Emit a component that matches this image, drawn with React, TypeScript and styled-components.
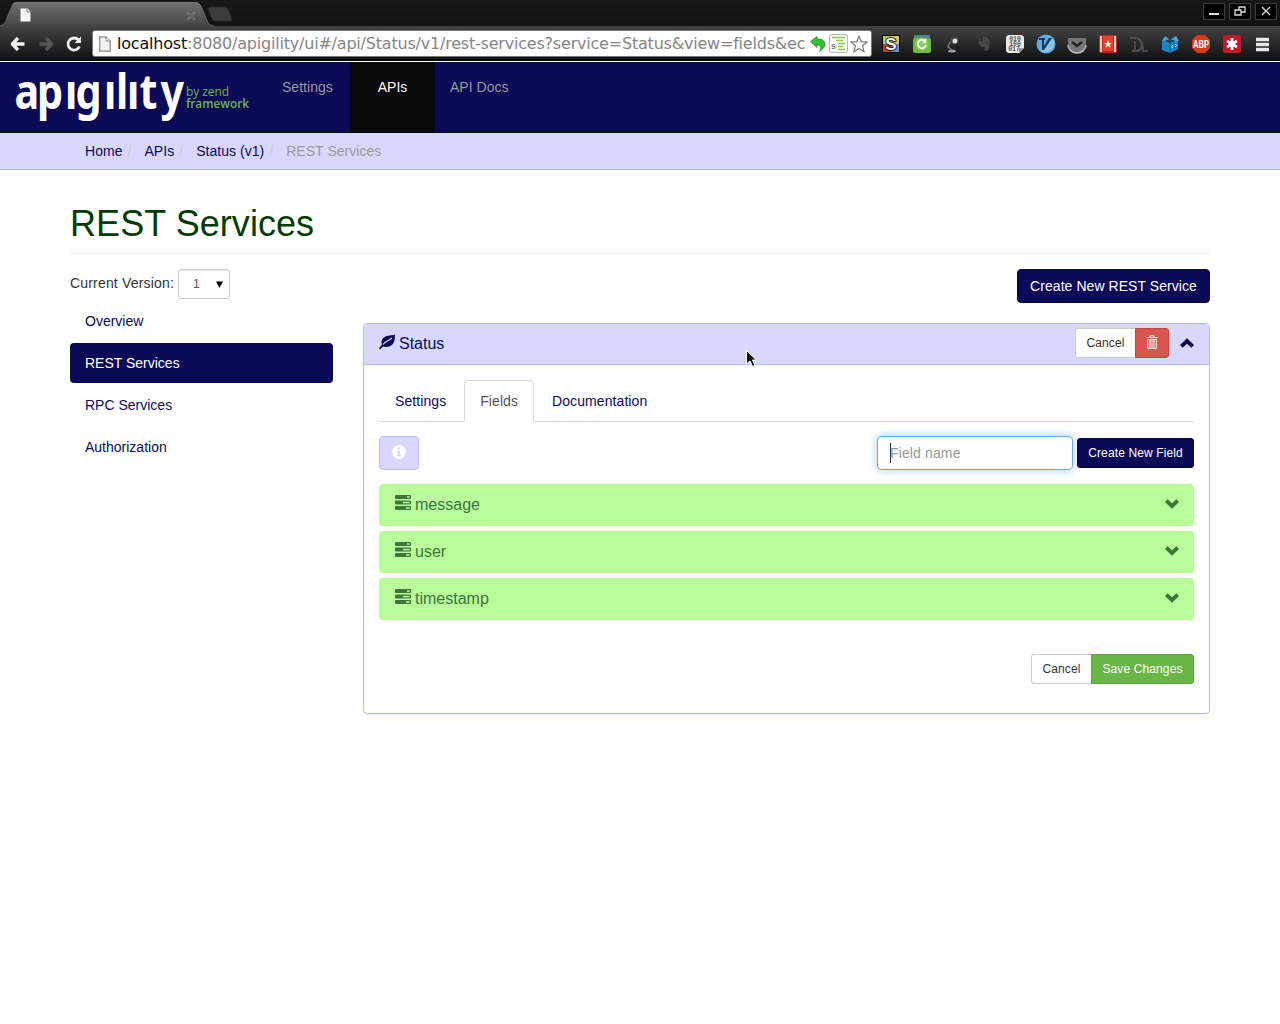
import React from "react";
import styled, { createGlobalStyle, css } from "styled-components";

const navy = "#0b0a56";
const lilac = "#d8d8ff";
const lilacBorder = "#b3b8ff";

const Global = createGlobalStyle`
  * { box-sizing: border-box; }
  body {
    margin: 0;
    background: #fff;
    color: #333;
    font: 14px/20px "Liberation Sans", Arial, sans-serif;
  }
  svg { display: block; flex: none; }
`;

const Screen = styled.div`
  position: relative;
  width: 1280px;
  height: 1024px;
  overflow: hidden;
`;

/* ---------- browser window ---------- */
const Chrome = styled.header`
  height: 62px;
  background: #111;
  border-bottom: 1px solid #fff;
`;
const TabStrip = styled.div`
  display: flex;
  justify-content: space-between;
  height: 26px;
  background: linear-gradient(#181818, #121212);
`;
const WindowButtons = styled.div`
  display: flex;
  gap: 4px;
  padding: 3px 3px 0 0;
`;
const WindowButton = styled.div`
  display: grid;
  place-items: center;
  width: 22px;
  height: 17px;
  background: #000;
  border: 1px solid #3c3c3c;
`;
const Toolbar = styled.div`
  display: flex;
  align-items: center;
  height: 35px;
  padding: 0 2px 0 8px;
  background: linear-gradient(#434343, #292929 50%, #111 95%, #000);
`;
const NavIcons = styled.div`
  display: flex;
  gap: 10px;
  width: 84px;
  padding-left: 1px;
`;
const AddressBar = styled.div`
  display: flex;
  align-items: center;
  width: 780px;
  height: 27px;
  padding: 0 2px 0 6px;
  background: #fff;
  border: 1px solid #777;
  border-radius: 3px;
`;
const Url = styled.div`
  width: 690px;
  margin: 0 2px 0 6px;
  white-space: nowrap;
  color: #858585;
  font: 16px/22px "DejaVu Sans", sans-serif;
  letter-spacing: -0.205px;
  b { color: #111; font-weight: 400; }
`;
const BarIcons = styled.div`
  display: flex;
  align-items: center;
  gap: 2px;
`;
const Extensions = styled.div`
  display: flex;
  margin-left: 3px;
`;
const Extension = styled.div`
  display: grid;
  place-items: center;
  width: 31px;
  height: 22px;
`;

/* ---------- page ---------- */
const Navbar = styled.nav`
  display: flex;
  height: 71px;
  background: ${navy};
  border-bottom: 1px solid #080808;
`;
const Brand = styled.div`
  width: 267px;
`;
const NavItem = styled.a<{ $active?: boolean; $width: number }>`
  width: ${(p) => p.$width}px;
  padding: 15px 0 0 15px;
  letter-spacing: 0.03px;
  color: ${(p) => (p.$active ? "#fff" : "#999")};
  ${(p) => p.$active && css`
    padding-left: 0;
    text-align: center;
    background: #080808;
  `}
`;
const Crumbs = styled.ol`
  display: flex;
  height: 37px;
  margin: 0;
  padding: 8px 85px;
  list-style: none;
  background: ${lilac};
  border-bottom: 1px solid ${lilacBorder};
`;
const Crumb = styled.li<{ $active?: boolean }>`
  letter-spacing: 0.04px;
  color: ${(p) => (p.$active ? "#999" : navy)};
  &:not(:first-child)::before {
    content: "/";
    padding: 0 13px 0 5px;
    color: #ccc;
  }
`;
const Container = styled.main`
  width: 1140px;
  margin: 0 auto;
`;
const PageTitle = styled.h1`
  height: 84px;
  margin: 0 0 15px;
  padding-top: 34px;
  color: #003c00;
  border-bottom: 1px solid #eee;
  font-size: 36px;
  font-weight: 400;
  line-height: 40px;
  letter-spacing: 0.06px;
`;
const Columns = styled.div`
  display: grid;
  grid-template-columns: 263px 847px;
  gap: 30px;
`;
const Version = styled.div`
  display: flex;
  gap: 4px;
  margin-bottom: 2px;
  line-height: 28px;
  letter-spacing: 0.18px;
`;
const Select = styled.div`
  display: flex;
  align-items: center;
  justify-content: space-between;
  width: 52px;
  height: 30px;
  padding: 0 6px 0 14px;
  color: #555;
  border: 1px solid #ccc;
  border-radius: 3px;
  box-shadow: inset 0 1px 1px rgba(0, 0, 0, 0.075);
  font-size: 12px;
`;
const SideNav = styled.nav`
  display: flex;
  flex-direction: column;
  gap: 2px;
`;
const SideLink = styled.a<{ $active?: boolean }>`
  height: 40px;
  padding: 10px 15px;
  border-radius: 4px;
  color: ${(p) => (p.$active ? "#fff" : navy)};
  background: ${(p) => (p.$active ? navy : "transparent")};
`;
const Actions = styled.div<{ $gap?: number; $lift?: boolean }>`
  display: flex;
  justify-content: flex-end;
  align-items: center;
  gap: ${(p) => p.$gap ?? 0}px;
  margin-top: ${(p) => (p.$lift ? -2 : 0)}px;
`;
const ToggleSlot = styled.div`
  padding: 0 0 0 11px;
`;

type Tone = "default" | "primary" | "danger" | "success" | "info";
const tones: Record<Tone, [string, string, string]> = {
  default: ["#fff", "#ccc", "#333"],
  primary: [navy, "#080740", "#fff"],
  danger: ["#d9534f", "#d43f3a", "#fff"],
  success: ["#69b747", "#5ba33b", "#fff"],
  info: [lilac, "#bfbfff", "#fff"],
};
const Button = styled.button<{ $tone: Tone; $width: number; $large?: boolean; $join?: "left" | "right" }>`
  display: flex;
  align-items: center;
  justify-content: center;
  width: ${(p) => p.$width}px;
  height: ${(p) => (p.$large ? 34 : 30)}px;
  padding: 0;
  white-space: nowrap;
  font: ${(p) => (p.$large ? "14px/20px" : "12px/18px")} "Liberation Sans", Arial, sans-serif;
  letter-spacing: ${(p) => (p.$large ? 0.06 : 0.12)}px;
  background: ${(p) => tones[p.$tone][0]};
  border: 1px solid ${(p) => tones[p.$tone][1]};
  color: ${(p) => tones[p.$tone][2]};
  border-radius: ${(p) =>
    p.$join === "left" ? "3px 0 0 3px" : p.$join === "right" ? "0 3px 3px 0" : p.$large ? "4px" : "3px"};
  ${(p) => p.$join === "left" && "border-right: 0;"}
`;
const Panel = styled.section`
  height: 391px;
  margin-top: 20px;
  border: 1px solid ${lilacBorder};
  border-radius: 4px;
  box-shadow: 0 1px 1px rgba(0, 0, 0, 0.05);
`;
const PanelHead = styled.div`
  display: flex;
  align-items: center;
  justify-content: space-between;
  height: 41px;
  padding: 0 15px;
  color: ${navy};
  background: ${lilac};
  border-bottom: 1px solid ${lilacBorder};
  border-radius: 3px 3px 0 0;
  font-size: 16px;
`;
const IconLabel = styled.div`
  display: flex;
  align-items: center;
  gap: 4px;
  svg { margin-top: -4px; }
`;
const PanelBody = styled.div`
  padding: 15px;
`;
const Tabs = styled.div`
  display: flex;
  gap: 2px;
  height: 42px;
  border-bottom: 1px solid #ddd;
`;
const Tab = styled.a<{ $active?: boolean }>`
  height: 42px;
  padding: 10px 15px;
  letter-spacing: 0.08px;
  border: 1px solid transparent;
  border-radius: 4px 4px 0 0;
  color: ${navy};
  ${(p) => p.$active && css`
    color: #555;
    background: #fff;
    border-color: #ddd #ddd #fff;
  `}
`;
const FieldTools = styled.div`
  display: flex;
  justify-content: space-between;
  margin: 14px 0;
  button svg { margin-top: -3px; }
`;
const FieldInput = styled.div`
  display: flex;
  align-items: center;
  width: 196px;
  height: 34px;
  padding-left: 12px;
  color: #999;
  letter-spacing: 0.13px;
  border: 1px solid #66afe9;
  border-radius: 4px;
  box-shadow: inset 0 1px 1px rgba(0, 0, 0, 0.075), 0 0 8px rgba(102, 175, 233, 0.6);
`;
const Caret = styled.span`
  width: 1px;
  height: 20px;
  margin-right: -1px;
  background: #333;
`;
const FieldList = styled.div`
  display: flex;
  flex-direction: column;
  gap: 5px;
  margin-bottom: 34px;
`;
const FieldRow = styled.div`
  display: flex;
  align-items: center;
  justify-content: space-between;
  height: 42px;
  padding: 0 14px 0 16px;
  color: #3c763d;
  background: #b9fd9a;
  border: 1px solid #bdf795;
  border-left: 0;
  border-radius: 4px;
  font-size: 16px;
  > svg { margin-top: -3px; }
`;
const Pointer = styled.div`
  position: absolute;
  left: 745px;
  top: 349px;
`;

/* ---------- icons ---------- */
const TabShape = () => (
  <svg width="240" height="26" viewBox="0 0 240 26">
    <defs>
      <linearGradient id="tab" x2="0" y2="1">
        <stop stopColor="#707070" />
        <stop offset="1" stopColor="#454545" />
      </linearGradient>
    </defs>
    <path d="M0 26C4 25 6 22 7 18L12 6Q13 2 17 2H195Q199 2 201 6L206 18C208 23 209 25 214 26Z" fill="url(#tab)" />
    <path d="M0 26C4 25 6 22 7 18L12 6Q13 2.500 17 2.500H195Q199 2.500 201 6L206 18C208 23 209 25 214 26" fill="none" stroke="#858585" strokeOpacity=".6" />
    <path d="M208 9Q208 7 210 7H224Q227 7 228 9L232 19Q232 21 230 21H216Q213 21 212 19Z" fill="#3c3c3c" stroke="#292929" />
    <path d="M20.500 8.500h7l3 3v10h-10z" fill="#f5f5f5" />
    <path d="M27 9v3h4" fill="none" stroke="#777" />
    <path d="M187.500 12.500l7 7m0-7l-7 7" stroke="#8d8d8d" strokeWidth="2.400" />
    <path d="M188 13l6 6m0-6l-6 6" stroke="#565656" strokeWidth="1.100" />
  </svg>
);

const ArrowIcon = ({ right }: { right?: boolean }) => (
  <svg width="18" height="18" viewBox="0 0 18 18">
    <path
      d="M9 3L3.500 9L9 15M4 9H15.500"
      transform={right ? "rotate(180 9 9)" : undefined}
      fill="none"
      stroke={right ? "#555" : "#eee"}
      strokeWidth="3.400"
      strokeLinejoin="round"
    />
  </svg>
);
const ReloadIcon = () => (
  <svg width="18" height="18" viewBox="0 0 18 18">
    <path d="M13.500 5A6 6 0 1 0 14.500 11.500" fill="none" stroke="#ececec" strokeWidth="2.800" />
    <path d="M9.500 8H16V1.500Z" fill="#ececec" />
  </svg>
);
const PageIcon = () => (
  <svg width="12" height="16" viewBox="0 0 12 16">
    <path d="M.8.8H7L11.200 5V15.200H.8Z" fill="#f3f3f3" stroke="#888" strokeWidth="1.200" />
    <path d="M7 1V5H11" fill="#fff" stroke="#888" />
  </svg>
);
const UndoIcon = () => (
  <svg width="18" height="18" viewBox="0 0 18 18">
    <path d="M1.500 6.500L8 1.500V4C14 3.500 17.500 7 15.500 12L10.500 16.500C13 12.500 11.500 10 8 9.500V12.500Z" fill="#2fc42f" stroke="#178517" strokeWidth=".7" />
  </svg>
);
const ReaderIcon = () => (
  <svg width="19" height="19" viewBox="0 0 19 19">
    <rect x=".5" y=".5" width="18" height="18" rx="2" fill="#fafafa" stroke="#b5b5b5" />
    <path d="M3 3.500H16M7 6.500H14M9 9.500H16M9 12.500H14M9 15.500H16" stroke="#8bcb55" strokeWidth="1.400" />
    <text x="2" y="15" fontSize="9" fontWeight="700" fill="#777" fontFamily="Liberation Sans, sans-serif">s</text>
  </svg>
);
const StarIcon = () => (
  <svg width="18" height="18" viewBox="0 0 18 18">
    <path d="M9 1.200L11.200 6.600L17 7L12.600 10.800L14 16.700L9 13.500L4 16.700L5.400 10.800L1 7L6.800 6.600Z" fill="#fff" stroke="#777" strokeWidth="1.200" />
  </svg>
);

const LeafIcon = () => (
  <svg width="16" height="16" viewBox="0 0 16 16">
    <path d="M16 .4C14 1.600 10 .7 6.500 2.500C3 4.300 1.800 7.500 3 10.500L0 14.500L1 15.600L4 12.500C8 13.800 12.500 12.300 14.500 9C16 6.500 15.800 3.300 16 .4Z" fill={navy} />
    <path d="M4 10.500C6 7.600 9 7.300 13 4" fill="none" stroke={lilac} strokeWidth="1.100" />
  </svg>
);
const TrashIcon = () => (
  <svg width="12" height="16" viewBox="0 0 12 16">
    <path d="M4 2V.6H8V2M.5 2.500H11.500M1.700 4.500V13.400H10.300V4.500M4 4.500V13M6 4.500V13M8 4.500V13M1.500 4.500H10.500" fill="none" stroke="#fff" strokeWidth="1" />
  </svg>
);
const Chevron = ({ up, color }: { up?: boolean; color: string }) => (
  <svg width="14" height="10" viewBox="0 0 14 10">
    <path d="M0 3L2.700.3L7 4.300L11.300.3L14 3L7 9.700Z" transform={up ? "rotate(180 7 5)" : undefined} fill={color} />
  </svg>
);
const InfoIcon = () => (
  <svg width="14" height="14" viewBox="0 0 14 14">
    <circle cx="7" cy="7" r="7" fill="#fff" />
    <path d="M6 2.500H8V4.300H6ZM5 5.500H8V9.800H9V11H5V9.800H6V6.700H5Z" fill={lilac} />
  </svg>
);
const TasksIcon = () => (
  <svg width="16" height="17" viewBox="0 0 16 17">
    {[0, 5.500, 11].map((y, i) => (
      <g key={y}>
        <rect y={y} width="16" height="4" rx="1" fill="#3c763d" />
        <rect x={[12, 8, 11][i]} y={y + 1.300} width={[2.600, 6.600, 3.600][i]} height="1.500" fill="#b9fd9a" />
      </g>
    ))}
  </svg>
);
const Logo = () => (
  <svg width="267" height="70" viewBox="0 0 267 70" overflow="visible" role="img" aria-label="apigility by zend framework">
    <text
      transform="scale(.86 1)"
      x="16.900 43 75.600 87.800 120.900 134.900 147.700 162.200 186.600"
      y="47"
      fontFamily="Noto Sans, sans-serif"
      fontWeight="700"
      fontSize="48"
      fill="#fff"
    >
      apıgılıty
    </text>
    <g fontFamily="Open Sans, sans-serif" fontSize="12" fill="#69b747">
      <text x="186" y="34" textLength="43">by zend</text>
      <text x="186" y="46" fontWeight="600" textLength="63" lengthAdjust="spacingAndGlyphs">framework</text>
    </g>
  </svg>
);

const glyph = { fontFamily: "Liberation Sans, sans-serif", fontWeight: 700, textAnchor: "middle" as const };
const extensionArt: React.ReactNode[] = [
  <>
    <path d="M0 0H9V9H0Z" fill="#b3c74b" /><path d="M9 0H18V9H9Z" fill="#e5c469" />
    <path d="M0 9H9V18H0Z" fill="#c63e28" /><path d="M9 9H18V18H9Z" fill="#6498c9" />
    <rect x=".5" y=".5" width="17" height="17" fill="none" stroke="#000" />
    <text x="9" y="15" fontSize="17" fill="#fff" stroke="#000" strokeWidth="1.600" paintOrder="stroke" {...glyph}>S</text>
  </>,
  <>
    <path d="M1 0H17V6H1Z" fill="#4a7fae" /><rect y="3" width="18" height="15" rx="2" fill="#71b946" />
    <circle cx="9" cy="9" r="6.500" fill="#8ccc60" />
    <path d="M12 6A4.200 4.200 0 1 0 13 10M12.500 4V7H9.500" fill="none" stroke="#fff" strokeWidth="1.600" />
  </>,
  <>
    <path d="M7 3L13 1L14 5L9 10L6 7Z" fill="#444" /><circle cx="11" cy="6" r="2.500" fill="#ddd" />
    <path d="M6 7L4 12L8 15" fill="none" stroke="#777" strokeWidth="1.500" /><ellipse cx="8" cy="16" rx="4" ry="1.600" fill="#999" />
  </>,
  <>
    <path d="M3 6L7 2Q13 1 14 5Q16 12 12 16L9 15L10 12Q4 13 3 6Z" fill="#494949" />
    <path d="M3 6H7V2M11 8H13" fill="none" stroke="#222" />
  </>,
  <>
    <path d="M2 0H16L18 2V13L13 18H2L0 16V2Z" fill="#e9e9e9" /><path d="M13 18V13H18Z" fill="#999" />
    <g fontSize="6.500" fill="#555" {...glyph} fontFamily="Liberation Mono, monospace">
      <text x="9" y="6">010</text><text x="9" y="11">100</text><text x="8" y="16">017</text>
    </g>
  </>,
  <>
    <circle cx="9" cy="9" r="9.500" fill="#66aadb" /><path d="M16 3A9.500 9.500 0 0 1 3 16Z" fill="#8ac3e8" />
    <path d="M2 3H8V5H7V11L12 3H15L7 15H5V5H2Z" fill="#173b5c" />
  </>,
  <>
    <path d="M0 3H18V9A9 9 0 0 1 0 9Z" fill="#777" /><path d="M0 10A9 8 0 0 0 18 10" fill="none" stroke="#bbb" strokeWidth="1.500" />
    <path d="M4 7L9 11L14 7" fill="none" stroke="#222" strokeWidth="2.500" />
  </>,
  <>
    <rect width="18" height="18" rx="1" fill="#b52b1e" /><path d="M2 1V17M16 1V17" stroke="#fff" strokeWidth="1.500" />
    <rect x="4" y="1" width="10" height="15" fill="#e54129" />
    <path d="M9 5L10 8H13L10.500 9.800L11.500 12.500L9 11L6.500 12.500L7.500 9.800L5 8H8Z" fill="#fff" />
  </>,
  <>
    <path d="M0 3H5Q12 4 12 10Q12 16 5 16H2" fill="none" stroke="#505050" strokeWidth="2.200" />
    <path d="M5 6V16M13 11V16H18" fill="none" stroke="#484848" strokeWidth="2" />
  </>,
  <>
    <path d="M1 6L9 8L17 6V14L9 18L1 15Z" fill="#1985c7" /><path d="M1 6L4 1L9 5L15 1L18 6L9 8Z" fill="#4aa9e3" />
    <path d="M3 6L9 4L15 6L9 8Z" fill="#0a4773" /><path d="M9 8V18" stroke="#0a5c92" />
    <path d="M12 10L10.500 12L12 13M14 9L15.500 10.500L14 12" fill="none" stroke="#fff" strokeWidth=".8" />
  </>,
  <>
    <path d="M5 0H13L18 5V13L13 18H5L0 13V5Z" fill="#d93a1c" />
    <text x="9" y="13" fontSize="10.500" textLength="16" lengthAdjust="spacingAndGlyphs" fill="#fff" {...glyph}>ABP</text>
  </>,
  <>
    <rect width="18" height="18" rx="2" fill="#c7162c" />
    <path d="M9 3V15M4 6L14 12M14 6L4 12" stroke="#fff" strokeWidth="2.800" />
  </>,
  <>
    <path d="M2 4.500H15M2 9.500H15M2 14.500H15" stroke="#e8e8e8" strokeWidth="3.400" />
  </>,
];

const fields = ["message", "user", "timestamp"];
const sideLinks = ["Overview", "REST Services", "RPC Services", "Authorization"];

export default function App() {
  return (
    <Screen>
      <Global />
      <Chrome>
        <TabStrip>
          <TabShape />
          <WindowButtons>
            {["M5 10H15", "M5 6H11V11H5ZM9 6V3H15V8H11", "M6 3L14 11M14 3L6 11"].map((d) => (
              <WindowButton key={d}>
                <svg width="20" height="15" viewBox="0 0 20 15">
                  <path d={d} fill="none" stroke="#ddd" strokeWidth={d === "M5 10H15" ? 2 : 1.300} />
                </svg>
              </WindowButton>
            ))}
          </WindowButtons>
        </TabStrip>
        <Toolbar>
          <NavIcons>
            <ArrowIcon />
            <ArrowIcon right />
            <ReloadIcon />
          </NavIcons>
          <AddressBar>
            <PageIcon />
            <Url><b>localhost</b>:8080/apigility/ui#/api/Status/v1/rest-services?service=Status&amp;view=fields&amp;ec</Url>
            <BarIcons>
              <UndoIcon />
              <ReaderIcon />
              <StarIcon />
            </BarIcons>
          </AddressBar>
          <Extensions>
            {extensionArt.map((art, i) => (
              <Extension key={i}>
                <svg width="18" height="18" viewBox="0 0 18 18" overflow="visible">{art}</svg>
              </Extension>
            ))}
          </Extensions>
        </Toolbar>
      </Chrome>

      <Navbar>
        <Brand><Logo /></Brand>
        <NavItem $width={83}>Settings</NavItem>
        <NavItem $width={85} $active>APIs</NavItem>
        <NavItem $width={90}>API Docs</NavItem>
      </Navbar>
      <Crumbs>
        <Crumb>Home</Crumb>
        <Crumb>APIs</Crumb>
        <Crumb>Status (v1)</Crumb>
        <Crumb $active>REST Services</Crumb>
      </Crumbs>

      <Container>
        <PageTitle>REST Services</PageTitle>
        <Columns>
          <aside>
            <Version>
              Current Version:
              <Select>
                1
                <svg width="7" height="7" viewBox="0 0 7 7"><path d="M0 .5H7L3.500 7Z" /></svg>
              </Select>
            </Version>
            <SideNav>
              {sideLinks.map((name) => (
                <SideLink key={name} $active={name === "REST Services"}>{name}</SideLink>
              ))}
            </SideNav>
          </aside>
          <div>
            <Actions>
              <Button $tone="primary" $width={193} $large>Create New REST Service</Button>
            </Actions>
            <Panel>
              <PanelHead>
                <IconLabel><LeafIcon />Status</IconLabel>
                <Actions $lift>
                  <Button $tone="default" $width={60} $join="left">Cancel</Button>
                  <Button $tone="danger" $width={34} $join="right"><TrashIcon /></Button>
                  <ToggleSlot><Chevron up color={navy} /></ToggleSlot>
                </Actions>
              </PanelHead>
              <PanelBody>
                <Tabs>
                  <Tab>Settings</Tab>
                  <Tab $active>Fields</Tab>
                  <Tab>Documentation</Tab>
                </Tabs>
                <FieldTools>
                  <Button $tone="info" $width={40} $large><InfoIcon /></Button>
                  <Actions $gap={4}>
                    <FieldInput><Caret />Field name</FieldInput>
                    <Button $tone="primary" $width={117}>Create New Field</Button>
                  </Actions>
                </FieldTools>
                <FieldList>
                  {fields.map((name) => (
                    <FieldRow key={name}>
                      <IconLabel><TasksIcon />{name}</IconLabel>
                      <Chevron color="#3c763d" />
                    </FieldRow>
                  ))}
                </FieldList>
                <Actions>
                  <Button $tone="default" $width={60} $join="left">Cancel</Button>
                  <Button $tone="success" $width={103} $join="right">Save Changes</Button>
                </Actions>
              </PanelBody>
            </Panel>
          </div>
        </Columns>
      </Container>
      <Pointer>
        <svg width="13" height="20" viewBox="0 0 13 20">
          <path d="M1.500 1.500V15L5 12L7.500 17.500L10 16.500L7.500 11H11.500Z" fill="#111" stroke="#fff" />
        </svg>
      </Pointer>
    </Screen>
  );
}
